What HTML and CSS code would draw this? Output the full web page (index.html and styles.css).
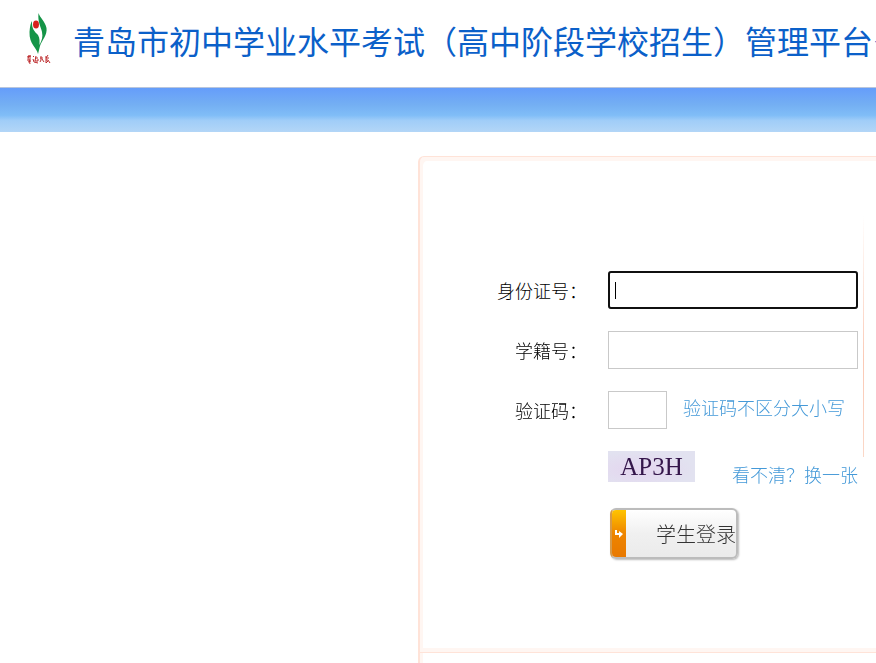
FILE: index.html
```html
<!DOCTYPE html>
<html lang="zh-CN">
<head>
<meta charset="utf-8">
<title>学生登录</title>
<link rel="stylesheet" href="styles.css">
</head>
<body>
<header class="header">
  <svg class="logo" viewBox="0 0 28 54" aria-hidden="true">
    <path fill="#159447" d="M12.500 1C14 6 19 9 20.500 16C21.500 23 16 28 14 34L12 42C11 36 3 32 3.500 20Q4 12 6 9C5.500 17 9 20 12 23C14 26 13.500 30 13.500 33C16 28 17 25 16 20C15 15 11.500 10 12.500 1Z"/>
    <ellipse cx="10" cy="12.500" rx="3" ry="4" fill="#d9201c"/>
    <g fill="none" stroke="#bd2b2d" stroke-width="1">
      <path d="M1 45l4-1M3 43l-1 4M4 43v4M1 48h4M3 47l1 5M2 50l3-1"/>
      <path d="M7 44l1 1M9 46h3M10 44l-1 5h3v-2M7 47l1 3 4 1"/>
      <path d="M14 46h3M15 44v4l-1 2M16 47l2 3"/>
      <path d="M20 44v7l2-2M22 43l-2 3h3M20 48h2l2 3"/>
    </g>
  </svg>
  <h1 class="title">青岛市初中学业水平考试（高中阶段学校招生）管理平台—</h1>
</header>
<div class="band"></div>
<main class="main">
  <section class="panel">
    <form class="form">
      <label class="label" for="idno">身份证号：</label>
      <input class="field" id="idno" type="text" autofocus>
      <label class="label" for="sno">学籍号：</label>
      <input class="field" id="sno" type="text">
      <label class="label" for="code">验证码：</label>
      <div class="code-row">
        <input class="field field-code" id="code" type="text">
        <span class="hint">验证码不区分大小写</span>
      </div>
      <div class="captcha-row">
        <span class="captcha">AP3H</span>
        <a class="refresh" href="#">看不清？换一张</a>
      </div>
      <button class="login" type="button">
        <span class="login-tab">
          <svg class="arrow" viewBox="0 0 10 10" aria-hidden="true"><path d="M2 1v4h4" fill="none" stroke="#fff" stroke-width="2"/><path d="M5 2l4 3-4 4z" fill="#fff"/></svg>
        </span>
        <span class="login-text">学生登录</span>
      </button>
    </form>
    <div class="divider"></div>
  </section>
  <div class="below"></div>
</main>
</body>
</html>
```
FILE: styles.css
```css
* { box-sizing: border-box; }
body {
  margin: 0;
  min-height: 100vh;
  display: flex;
  flex-direction: column;
  overflow: hidden;
  background: #fff;
  color: #000;
  font: 300 18px/24px "Noto Sans CJK SC", sans-serif;
}
.header {
  display: flex;
  align-items: flex-start;
  gap: 19px;
  height: 88px;
  padding: 12px 0 0 26px;
  border-bottom: 1px solid #b9c6dc;
}
.logo { flex: none; width: 28px; height: 54px; }
.title {
  margin: 4px 0 0;
  color: #0b60c9;
  font-size: 32px;
  font-weight: 400;
  line-height: 48px;
  white-space: nowrap;
}
.band {
  height: 44px;
  background: linear-gradient(#659dfa, #74aff3 38%, #80bdf7 62%, #a0cdf8 74%, #b3d6f7);
}
.main {
  flex: 1;
  display: flex;
  flex-direction: column;
  margin: 24px 0 0 418px;
}
.panel {
  display: flex;
  align-items: flex-start;
  border: solid #ffe3d8;
  border-width: 1px 0 1px 2px;
  border-top-left-radius: 6px;
  box-shadow: inset 3px 4px #fff6f2, inset 0 -4px #fff6f2;
  padding: 58px 0 93px 77px;
}
.form {
  display: grid;
  grid-template-columns: 90px 250px;
  gap: 22px 21px;
  padding-top: 56px;
}
.label { align-self: center; text-align: right; }
.field {
  display: block;
  width: 100%;
  height: 38px;
  padding: 0 6px;
  border: 1px solid #c9c9c9;
  background: #fff;
  font: inherit;
}
.field:focus {
  outline: 2px solid #101010;
  outline-offset: -2px;
  border-radius: 3px;
  caret-color: transparent;
}
.field:focus:placeholder-shown,
.field:focus {
  background: linear-gradient(#000, #000) 6px center / 1px 17px no-repeat #fff;
}
.field-code { width: 59px; }
.code-row { display: flex; gap: 16px; align-items: flex-start; }
.hint { color: #4499d8; line-height: 32px; }
.captcha-row {
  grid-column: 2;
  display: flex;
  justify-content: space-between;
  align-items: flex-start;
}
.captcha {
  width: 87px;
  background: radial-gradient(ellipse at 35% 60%, #e4d5ef, #e2e2f0 70%);
  color: #35164b;
  font: 25px/31px "Liberation Serif", serif;
  text-align: center;
}
.refresh { color: #4499d8; line-height: 24px; padding-top: 11px; text-decoration: none; }
.login {
  grid-column: 2;
  display: flex;
  width: 128px;
  height: 51px;
  margin: 0 2px;
  padding: 0;
  overflow: hidden;
  border: 2px solid #bcbcbc;
  border-left-color: #d69a4a;
  border-radius: 6px;
  background: linear-gradient(#fff, #f0f0f0 50%, #ebebeb);
  box-shadow: 1px 1px 2px #bbb;
  color: #333;
  font: 300 20px/47px "Noto Sans CJK SC", sans-serif;
}
.login-tab {
  display: flex;
  align-items: center;
  justify-content: center;
  width: 14px;
  height: 47px;
  background: linear-gradient(#ffc400, #ee8500 50%, #e87800);
}
.arrow { width: 10px; height: 10px; }
.login-text { flex: 1; text-align: right; white-space: nowrap; }
.divider {
  width: 1px;
  height: 242px;
  margin-left: 5px;
  background: linear-gradient(transparent, #fbc9b5 60%, #fbd8c8);
}
.below {
  flex: 1;
  border-left: 2px solid #ffe3d8;
  box-shadow: inset 3px 0 #fff6f2;
}
```
